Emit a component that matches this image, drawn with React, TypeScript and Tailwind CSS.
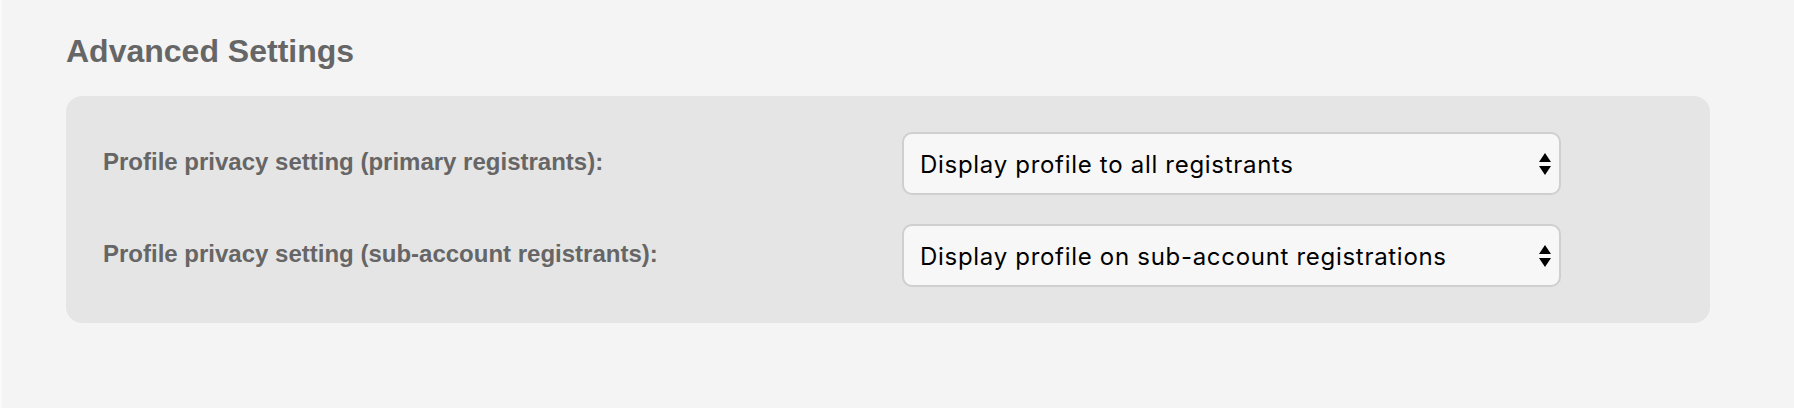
import React from "react";

function Arrows() {
  return (
    <svg width="12" height="22" viewBox="0 0 12 22" className="pointer-events-none absolute right-[10px] top-1/2 -translate-y-1/2">
      <path d="M6 0 L12 9 L0 9 Z" fill="#000" />
      <path d="M0 13 L12 13 L6 22 Z" fill="#000" />
    </svg>
  );
}

function Row({ label, value }: { label: string; value: string }) {
  return (
    <div className="flex items-center">
      <div className="w-[800px] pl-[1px] text-[24px] font-bold leading-none text-[#666666] [font-family:'Liberation_Sans',Arial,sans-serif] -translate-y-[2px]">
        {label}
      </div>
      <div className="relative w-[659px]">
        <select
          defaultValue={value}
          className="h-[63px] w-full appearance-none rounded-[10px] border-2 border-[#cfcfcf] bg-[#f7f7f7] pl-[16px] pr-10 pt-[2px] text-[24px] tracking-[0.7px] text-black outline-none [font-family:Inter,'Noto_Sans',sans-serif]"
        >
          <option>{value}</option>
        </select>
        <Arrows />
      </div>
    </div>
  );
}

export default function App() {
  return (
    <div className="min-h-screen border-l-2 border-[#fafafa] bg-[#f4f4f4] pl-[64px] pt-[33px] pb-[84px]">
      <h2 className="text-[32px] font-bold leading-[37px] text-[#666666] [font-family:'Liberation_Sans',Arial,sans-serif]">
        Advanced Settings
      </h2>
      <div className="mt-[26px] flex w-[1644px] flex-col gap-[29px] rounded-[16px] bg-[#e5e5e5] py-[36px] pl-[36px]">
        <Row label="Profile privacy setting (primary registrants):" value="Display profile to all registrants" />
        <Row label="Profile privacy setting (sub-account registrants):" value="Display profile on sub-account registrations" />
      </div>
    </div>
  );
}
